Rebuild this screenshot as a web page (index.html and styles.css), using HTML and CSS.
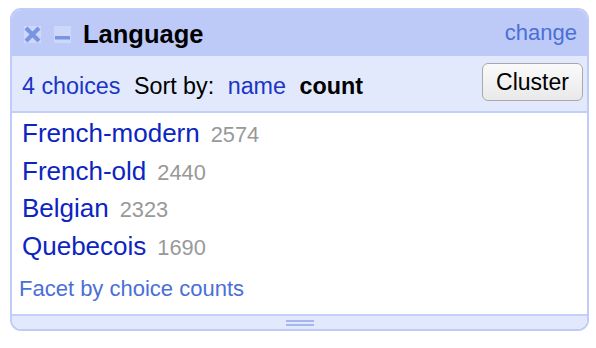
FILE: index.html
```html
<!DOCTYPE html>
<html>
<head>
<meta charset="utf-8">
<link rel="stylesheet" href="styles.css">
</head>
<body>
<div class="panel">
  <div class="header">
    <span class="icon icon-x">
      <svg width="17" height="17" viewBox="0 0 17 17"><path d="M2 2 L15 15 M15 2 L2 15" stroke="#7894e3" stroke-width="4.2" stroke-linecap="butt"/></svg>
    </span>
    <span class="icon icon-min">
      <svg width="17" height="17" viewBox="0 0 17 17"><rect x="1" y="10" width="15" height="3.5" fill="#7894e3"/></svg>
    </span>
    <span class="title">Language</span>
    <a class="change">change</a>
  </div>
  <div class="controls">
    <div class="sort">
      <a class="link-dark">4 choices</a>
      <span class="label">Sort by:</span>
      <a class="link-dark">name</a>
      <b class="active">count</b>
    </div>
    <button class="btn">Cluster</button>
  </div>
  <div class="body">
    <div class="choice"><a class="name">French-modern</a><span class="count">2574</span></div>
    <div class="choice"><a class="name">French-old</a><span class="count">2440</span></div>
    <div class="choice"><a class="name">Belgian</a><span class="count">2323</span></div>
    <div class="choice"><a class="name">Quebecois</a><span class="count">1690</span></div>
    <a class="facet-link">Facet by choice counts</a>
  </div>
  <div class="footer"><span class="grip"></span></div>
</div>
</body>
</html>
```
FILE: styles.css
```css
html, body {
  margin: 0;
  padding: 0;
  background: #ffffff;
}
body {
  font-family: "Liberation Sans", Arial, Helvetica, sans-serif;
  width: 596px;
  height: 348px;
  overflow: hidden;
}
.panel {
  margin: 8px 7px 0 10px;
  width: 579px;
  box-sizing: border-box;
  border: 2px solid #bfccf7;
  border-radius: 11px;
  overflow: hidden;
  display: flex;
  flex-direction: column;
}
.header {
  background: #bdcaf7;
  height: 46px;
  display: flex;
  align-items: center;
  padding: 0 10px 0 12px;
  box-sizing: border-box;
}
.icon {
  width: 17px;
  height: 17px;
  background: #ccd7f9;
  display: flex;
  margin-top: 2px;
}
.icon-min {
  margin-left: 13px;
}
.title {
  margin-left: 12px;
  font-weight: bold;
  font-size: 25.5px;
  color: #000;
  margin-top: 3px;
}
.change {
  margin-left: auto;
  font-size: 22px;
  color: #4a6fd6;
  margin-top: -1px;
}
.controls {
  background: #e3e9fc;
  height: 57px;
  box-sizing: border-box;
  border-bottom: 2px solid #c2cff8;
  display: flex;
  align-items: flex-start;
  padding: 7px 4px 0 10px;
}
.sort {
  font-size: 23.3px;
  line-height: 26px;
  margin-top: 10px;
  display: flex;
  gap: 13.5px;
  color: #000;
}
.link-dark {
  color: #1a36c6;
}
.active {
  font-weight: bold;
  color: #000;
}
.btn {
  margin-left: auto;
  width: 101px;
  height: 38px;
  font-family: "Liberation Sans", Arial, sans-serif;
  font-size: 23px;
  color: #000;
  border: 1px solid #a9a9a9;
  border-radius: 6px;
  background: linear-gradient(#fafafa, #e9e9e9);
  padding: 0;
}
.body {
  background: #fff;
  display: flex;
  flex-direction: column;
  padding: 2px 0 9px 10px;
  height: 201px;
  box-sizing: border-box;
}
.choice {
  height: 37.7px;
  line-height: 37.7px;
  display: flex;
  align-items: baseline;
}
.name {
  font-size: 26px;
  color: #0c24c2;
}
.count {
  font-size: 21.8px;
  color: #999;
  margin-left: 11px;
}
.facet-link {
  font-size: 22px;
  line-height: 30px;
  color: #4a6fd6;
  margin-top: 8px;
  margin-left: -3px;
}
.footer {
  background: #e3e9fc;
  border-top: 2px solid #c2cff8;
  height: 13px;
  display: flex;
  justify-content: center;
  align-items: center;
}
.grip {
  width: 28px;
  height: 2px;
  border-top: 2px solid #a5b7ee;
  border-bottom: 2px solid #a5b7ee;
}
```
